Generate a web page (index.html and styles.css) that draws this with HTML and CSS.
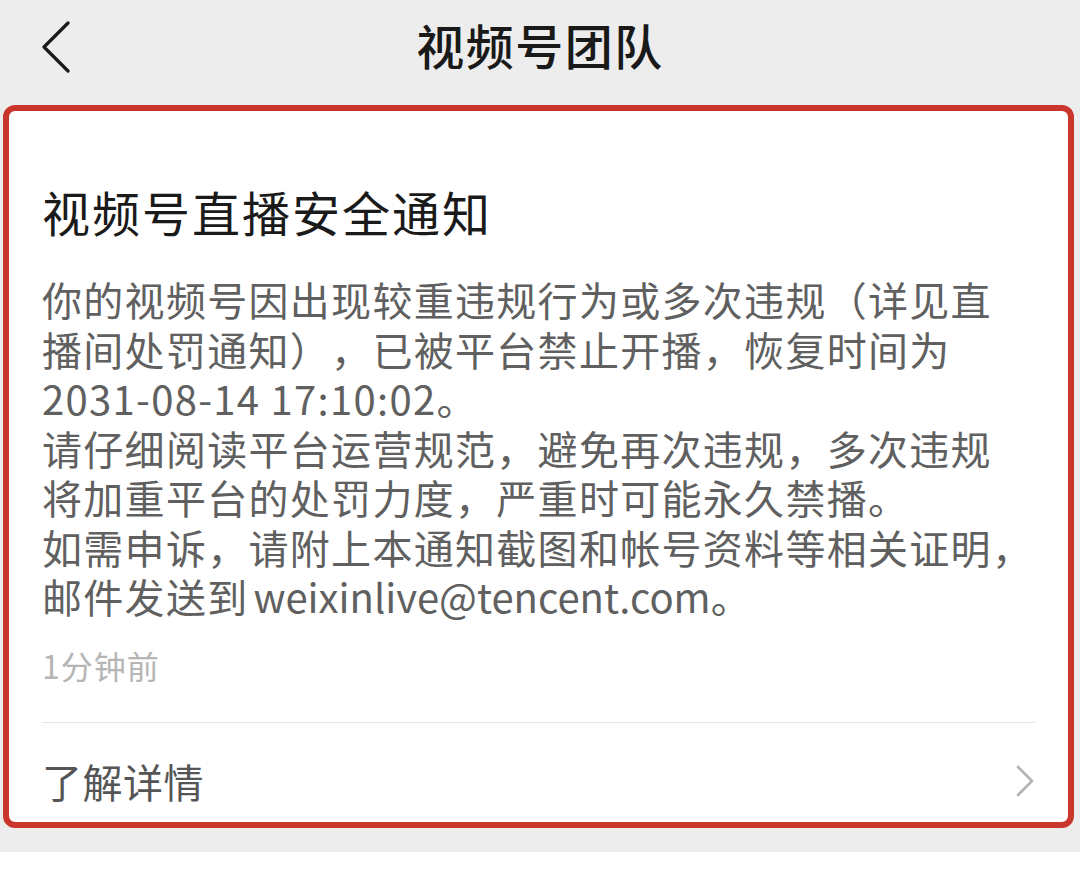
FILE: index.html
```html
<!DOCTYPE html>
<html lang="zh-CN">
<head>
<meta charset="utf-8">
<title>视频号团队</title>
<link rel="stylesheet" href="styles.css">
</head>
<body>
<header class="nav">
  <span class="nav-back">
    <svg width="30" height="52" viewBox="0 0 30 52"><polyline points="27,2 3,26 27,50" fill="none" stroke="#1a1a1a" stroke-width="3.2" stroke-linecap="round" stroke-linejoin="round"/></svg>
  </span>
  <h1 class="nav-title">视频号团队</h1>
</header>
<main class="card">
  <h2 class="card-title">视频号直播安全通知</h2>
  <p class="card-body">你的视频号因出现较重违规行为或多次违规（详见直<br>播间处罚通知），已被平台禁止开播，恢复时间为<br>2031-08-14 17:10:02。<br>请仔细阅读平台运营规范，避免再次违规，多次违规<br>将加重平台的处罚力度，严重时可能永久禁播。<br>如需申诉，请附上本通知截图和帐号资料等相关证明，<br>邮件发送到<span class="latin">weixinlive@tencent.com</span>。</p>
  <div class="card-time">1分钟前</div>
  <div class="card-sep"></div>
  <div class="card-link">
    <span class="link-text">了解详情</span>
    <svg class="link-arrow" width="18" height="32" viewBox="0 0 18 32"><polyline points="2,2 16,16 2,30" fill="none" stroke="#b2b2b2" stroke-width="2.6" stroke-linecap="round" stroke-linejoin="round"/></svg>
  </div>
</main>
<div class="footer"></div>
</body>
</html>
```

FILE: styles.css
```css
html, body {
  margin: 0;
  padding: 0;
}
body {
  background: #ededed;
  font-family: "Noto Sans CJK SC", "Noto Sans", sans-serif;
  width: 1080px;
  height: 882px;
  overflow: hidden;
  text-spacing-trim: space-all;
}
.nav {
  height: 96px;
  box-sizing: border-box;
  padding-bottom: 8px;
  display: flex;
  align-items: center;
  justify-content: center;
  position: relative;
}
.nav-back {
  position: absolute;
  left: 41px;
  top: 21px;
  display: block;
  line-height: 0;
}
.nav-title {
  margin: 0;
  font-size: 48px;
  font-weight: 500;
  color: #191919;
  letter-spacing: 1.5px;
  line-height: 60px;
}
.card {
  display: block;
  margin: 9px 6px 0 3px;
  border: 6px solid #c9362c;
  border-radius: 12px;
  background: #ffffff;
  padding: 70px 33px 0 33px;
  box-sizing: border-box;
  height: 723px;
}
.card-title {
  margin: 0;
  font-size: 48px;
  font-weight: 400;
  color: #1a1a1a;
  line-height: 60px;
  letter-spacing: 2px;
}
.card-body {
  margin: 34px 0 0 0;
  font-size: 40px;
  line-height: 49.5px;
  color: #606060;
  letter-spacing: 1.3px;
  white-space: nowrap;
}
.latin {
  letter-spacing: 0;
  margin-left: 5px;
}
.card-time {
  margin-top: 23px;
  font-size: 32px;
  line-height: 40px;
  color: #b5b5b5;
  letter-spacing: 1px;
}
.card-sep {
  margin-top: 37px;
  height: 1px;
  background: #e6e6e6;
}
.card-link {
  height: 98px;
  padding-top: 18px;
  box-sizing: border-box;
  display: flex;
  align-items: center;
  justify-content: space-between;
}
.link-text {
  font-size: 40px;
  color: #555555;
  letter-spacing: 0.5px;
  line-height: 50px;
}
.link-arrow {
  margin-right: 1px;
}
.footer {
  margin-top: 24px;
  height: 40px;
  background: #ffffff;
}
```
